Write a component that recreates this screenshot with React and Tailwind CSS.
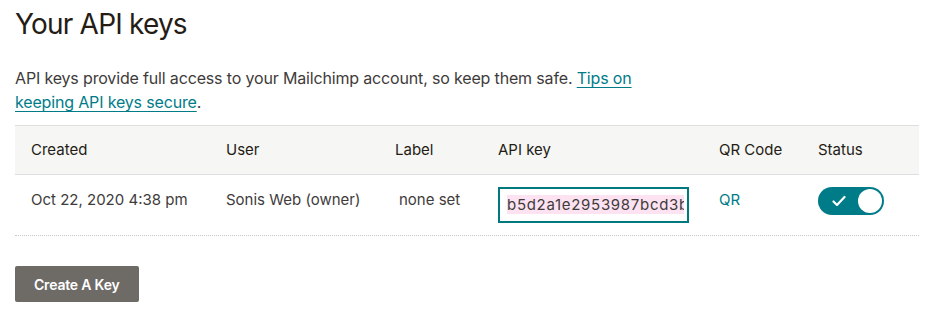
import React from "react";

export default function App() {
  return (
    <div className="w-[936px] h-[320px] bg-white px-[15px] text-[#241c15]" style={{ fontFamily: "Inter, 'Noto Sans', sans-serif" }}>
      <h1 className="pt-[6px] text-[28px] leading-[36px] font-normal tracking-[-0.8px] text-[#241c15]">Your API keys</h1>
      <p className="mt-[24px] text-[16px] leading-[24px] text-[#403b3b] w-[640px] tracking-[-0.16px]">
        API keys provide full access to your Mailchimp account, so keep them safe.{" "}
        <a className="text-[#007c89] underline underline-offset-[3px]" href="#">Tips on keeping API keys secure</a>.
      </p>
      <div className="mt-[11px] w-[904px]">
        <div className="flex items-center h-[50px] bg-[#f6f6f4] border-t border-b border-[#dfdfdf] text-[15px] text-[#241c15]">
          <div className="w-[211px] pl-[16px]">Created</div>
          <div className="w-[169px]">User</div>
          <div className="w-[103px]">Label</div>
          <div className="w-[221px]">API key</div>
          <div className="w-[99px]">QR Code</div>
          <div>Status</div>
        </div>
        <div className="flex items-start h-[61px] pt-[12px] border-b border-dotted border-[#c8c8c8] text-[15px] leading-[26px] text-[#403b3b]">
          <div className="w-[211px] pl-[16px]">Oct 22, 2020 4:38 pm</div>
          <div className="w-[169px]">Sonis Web (owner)</div>
          <div className="w-[103px] pl-[4px]">none set</div>
          <div className="w-[221px]">
            <div className="w-[191px] h-[36px] border-2 border-[#00797e] pl-[7px] pr-[3px] flex items-center">
              <div className="w-full overflow-hidden whitespace-nowrap">
                <span className="bg-[#fde3f2] text-[#403b3b] text-[15px] leading-[20px] tracking-[0.7px]">b5d2a1e2953987bcd3b</span>
              </div>
            </div>
          </div>
          <div className="w-[99px] text-[#007c89]">QR</div>
          <div>
            <div className="w-[66px] h-[28px] rounded-full bg-[#007c89] flex items-center justify-between pl-[14px] pr-[2px]">
              <svg width="14" height="12" viewBox="0 0 14 12" fill="none">
                <path d="M1.5 6.5 L5 10 L12.5 2" stroke="white" strokeWidth="2.2" strokeLinecap="round" strokeLinejoin="round" />
              </svg>
              <div className="w-[24px] h-[24px] rounded-full bg-white" />
            </div>
          </div>
        </div>
      </div>
      <button className="mt-[30px] h-[36px] px-[19px] rounded-[2px] bg-[#6e6a66] text-white text-[14px] font-semibold tracking-[-0.2px]">
        Create A Key
      </button>
    </div>
  );
}
